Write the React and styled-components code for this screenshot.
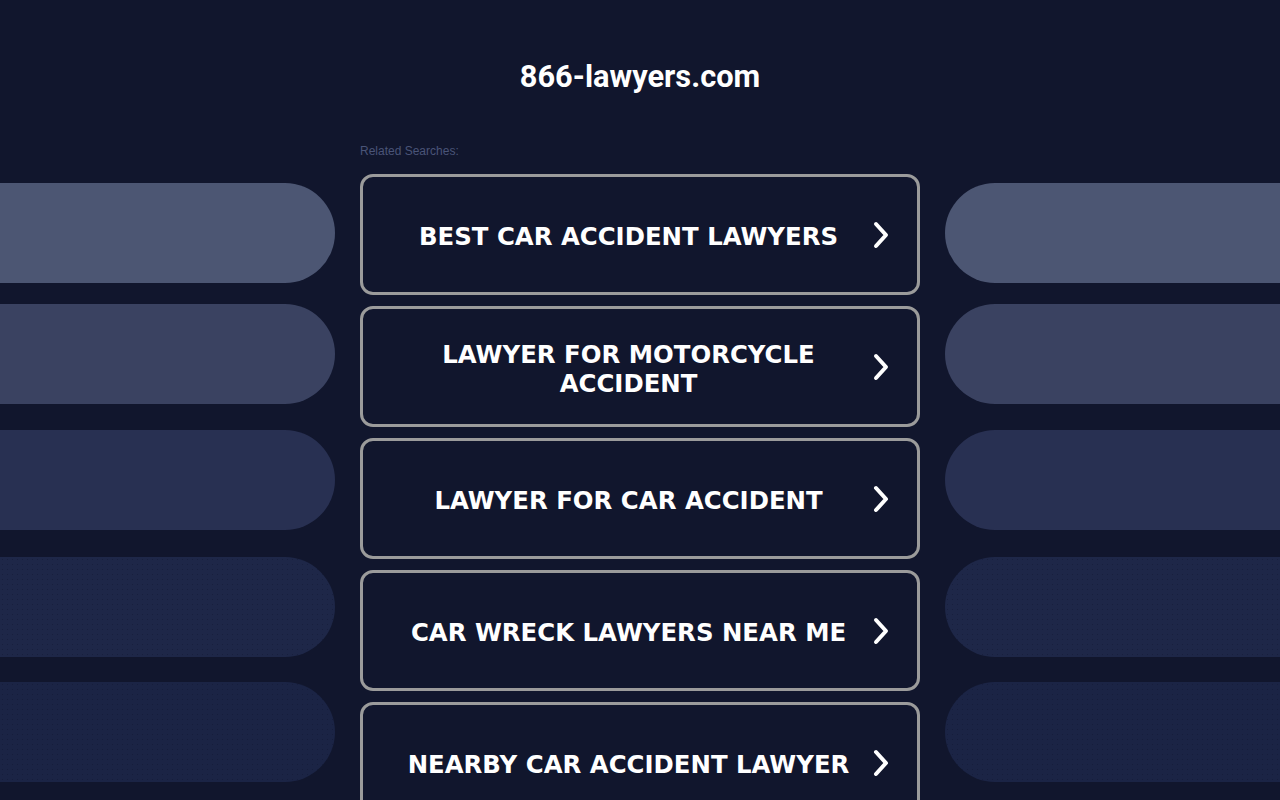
import React from "react";
import styled, { createGlobalStyle } from "styled-components";

const GlobalStyle = createGlobalStyle`
    html, body {
        margin: 0;
        padding: 0;
        background-color: #11162d;
        overflow: hidden;
    }
    * {
        box-sizing: border-box;
    }
`;

const searches = [
    "BEST CAR ACCIDENT LAWYERS",
    "LAWYER FOR MOTORCYCLE ACCIDENT",
    "LAWYER FOR CAR ACCIDENT",
    "CAR WRECK LAWYERS NEAR ME",
    "NEARBY CAR ACCIDENT LAWYER",
];

const pills = [
    { color: "#4c5673", dotted: false, gap: 0 },
    { color: "#3a4261", dotted: false, gap: 21 },
    { color: "#283052", dotted: false, gap: 26 },
    { color: "#1e2748", dotted: true, gap: 27 },
    { color: "#1b2445", dotted: true, gap: 25 },
];

function Chevron() {
    return (
        <Arrow viewBox="0 0 24 30" aria-hidden="true">
            <path d="M7 4 L17 15 L7 26" />
        </Arrow>
    );
}

function PillColumn({ side }) {
    return (
        <Pills>
            {pills.map((p, i) => (
                <Pill key={i} $side={side} $color={p.color} $dotted={p.dotted} $gap={p.gap} />
            ))}
        </Pills>
    );
}

export default function App() {
    return (
        <Page>
            <GlobalStyle />
            <Header>
                <Title>866-lawyers.com</Title>
            </Header>
            <Layout>
                <PillColumn side="left" />
                <Center>
                    <Label>Related Searches:</Label>
                    <List>
                        {searches.map((s) => (
                            <Card key={s}>
                                <CardText>{s}</CardText>
                                <Chevron />
                            </Card>
                        ))}
                    </List>
                </Center>
                <PillColumn side="right" />
            </Layout>
        </Page>
    );
}

const Page = styled.div`
    width: 1280px;
    height: 800px;
    background-color: #11162d;
    font-family: "Liberation Sans", Arial, sans-serif;
`;

const Header = styled.header`
    display: flex;
    justify-content: center;
    padding-top: 58px;
    height: 140px;
`;

const Title = styled.h1`
    margin: 0;
    font-family: Roboto, "Liberation Sans", Arial, sans-serif;
    font-size: 30.8px;
    line-height: 38px;
    font-weight: 700;
    color: #ffffff;
`;

const Layout = styled.div`
    display: grid;
    grid-template-columns: 1fr 560px 1fr;
    column-gap: 25px;
`;

const Pills = styled.div`
    display: flex;
    flex-direction: column;
    padding-top: 43px;
`;

const Pill = styled.div`
    height: 100px;
    margin-top: ${(p) => p.$gap}px;
    background-color: ${(p) => p.$color};
    border-radius: ${(p) => (p.$side === "left" ? "0 50px 50px 0" : "50px 0 0 50px")};
    ${(p) =>
        p.$dotted &&
        `background-image: radial-gradient(rgba(12, 18, 42, 0.35) 0.5px, transparent 1px);
         background-size: 5px 5px;`}
`;

const Center = styled.div`
    display: flex;
    flex-direction: column;
`;

const Label = styled.div`
    font-size: 12px;
    line-height: 14px;
    color: #4a5478;
    padding-top: 4px;
    height: 34px;
`;

const List = styled.div`
    display: flex;
    flex-direction: column;
    gap: 11px;
`;

const Card = styled.a`
    display: flex;
    align-items: center;
    height: 121px;
    padding: 4px 24px 0 31px;
    border: 3px solid #9b9b9b;
    border-radius: 13px;
    background-color: #11162d;
    cursor: pointer;
    text-decoration: none;
`;

const CardText = styled.span`
    flex: 1;
    text-align: center;
    font-family: "DejaVu Sans", Verdana, sans-serif;
    font-weight: 700;
    font-size: 24.4px;
    line-height: 29px;
    color: #ffffff;
    padding-right: 6px;
`;

const Arrow = styled.svg`
    width: 24px;
    height: 30px;
    margin-top: -4px;
    flex-shrink: 0;
    fill: none;
    stroke: #ffffff;
    stroke-width: 4;
    stroke-linecap: round;
    stroke-linejoin: round;
`;
